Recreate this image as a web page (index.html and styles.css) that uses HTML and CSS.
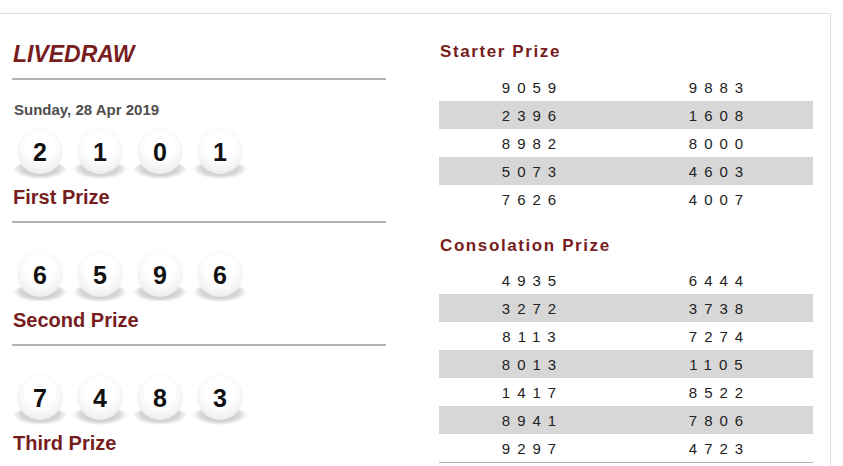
FILE: index.html
```html
<!DOCTYPE html>
<html>
<head>
<meta charset="utf-8">
<title>Livedraw</title>
<link rel="stylesheet" href="styles.css">
</head>
<body>
<div class="wrap">
  <div class="col-left">
    <h1 class="title">LIVEDRAW</h1>
    <hr class="rule rule-top">
    <div class="date">Sunday, 28 Apr 2019</div>
    <div class="prize">
      <div class="balls">
        <span class="ball">2</span><span class="ball">1</span><span class="ball">0</span><span class="ball">1</span>
      </div>
      <div class="prize-label">First Prize</div>
      <hr class="rule">
    </div>
    <div class="prize">
      <div class="balls">
        <span class="ball">6</span><span class="ball">5</span><span class="ball">9</span><span class="ball">6</span>
      </div>
      <div class="prize-label">Second Prize</div>
      <hr class="rule">
    </div>
    <div class="prize">
      <div class="balls">
        <span class="ball">7</span><span class="ball">4</span><span class="ball">8</span><span class="ball">3</span>
      </div>
      <div class="prize-label">Third Prize</div>
      <hr class="rule">
    </div>
  </div>
  <div class="col-right">
    <h2 class="sub">Starter Prize</h2>
    <table class="nums">
      <tr><td>9059</td><td>9883</td></tr>
      <tr><td>2396</td><td>1608</td></tr>
      <tr><td>8982</td><td>8000</td></tr>
      <tr><td>5073</td><td>4603</td></tr>
      <tr><td>7626</td><td>4007</td></tr>
    </table>
    <h2 class="sub sub-cons">Consolation Prize</h2>
    <table class="nums nums-last">
      <tr><td>4935</td><td>6444</td></tr>
      <tr><td>3272</td><td>3738</td></tr>
      <tr><td>8113</td><td>7274</td></tr>
      <tr><td>8013</td><td>1105</td></tr>
      <tr><td>1417</td><td>8522</td></tr>
      <tr><td>8941</td><td>7806</td></tr>
      <tr><td>9297</td><td>4723</td></tr>
    </table>
  </div>
</div>
</body>
</html>
```
FILE: styles.css
```css
html, body {
  margin: 0;
  padding: 0;
}
body {
  font-family: "Liberation Sans", Arial, sans-serif;
  color: #222;
}
.wrap {
  margin-top: 13px;
  width: 818px;
  border-top: 1px solid #dedede;
  border-right: 1px solid #dedede;
  padding-left: 12px;
  display: flex;
  gap: 53px;
  box-sizing: content-box;
}
.col-left {
  width: 374px;
}
.col-right {
  width: 374px;
}
.title {
  margin: 27px 0 0 0;
  font-size: 23px;
  line-height: 27px;
  font-style: italic;
  font-weight: bold;
  color: #771d1d;
  padding-left: 1px;
}
.rule {
  border: 0;
  height: 2px;
  background: #b3b3b3;
  margin: 12px 0 0 0;
}
.rule-top {
  margin-top: 10px;
}
.date {
  margin-top: 21px;
  font-size: 15px;
  line-height: 17px;
  font-weight: bold;
  color: #4e4e4e;
  padding-left: 2px;
}
.prize {
  margin-top: 10px;
}
.prize + .prize {
  margin-top: 28px;
}
.balls {
  display: flex;
  gap: 14px;
  padding-left: 5px;
  height: 50px;
}
.ball {
  position: relative;
  width: 46px;
  height: 46px;
  border-radius: 50%;
  background: radial-gradient(circle at 50% 40%, #ffffff 0%, #ffffff 40%, #f2f2f2 68%, #dcdcdc 100%);
  display: flex;
  align-items: center;
  justify-content: center;
  font-size: 25px;
  font-weight: bold;
  color: #111;
  padding-top: 3px;
  box-sizing: border-box;
}
.ball::before {
  content: "";
  position: absolute;
  left: -4px;
  right: -4px;
  bottom: -5px;
  height: 18px;
  border-radius: 50%;
  background: radial-gradient(ellipse at 50% 40%, rgba(0, 0, 0, 0.26) 0%, rgba(0, 0, 0, 0.16) 50%, rgba(0, 0, 0, 0) 72%);
  z-index: -1;
}
.prize-label {
  margin-top: 8px;
  font-size: 20px;
  line-height: 23px;
  font-weight: bold;
  color: #771d1d;
  padding-left: 1px;
}
.sub {
  margin: 28px 0 0 0;
  font-size: 17px;
  line-height: 19px;
  font-weight: bold;
  letter-spacing: 1.6px;
  color: #771d1d;
  padding-left: 1px;
}
.sub-cons {
  margin-top: 23px;
}
.nums {
  width: 374px;
  border-collapse: collapse;
  margin-top: 12px;
}
.nums-last {
  margin-top: 11px;
  border-bottom: 1px solid #b3b3b3;
}
.nums td {
  width: 50%;
  height: 28px;
  padding: 0;
  text-align: center;
  font-size: 15px;
  letter-spacing: 7px;
  color: #222;
}
.nums tr:nth-child(even) td {
  background: #d7d7d7;
}
```
